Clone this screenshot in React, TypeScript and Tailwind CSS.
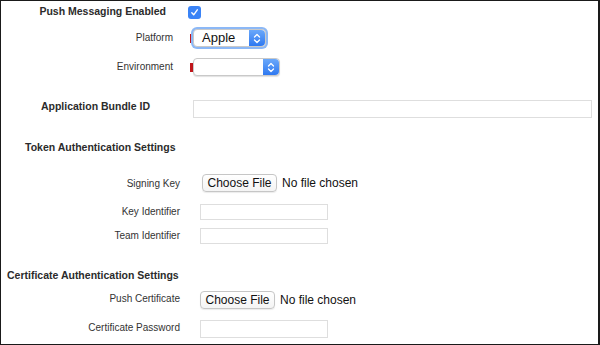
function Stepper() {
  return (
    <div className="flex h-full w-[16px] items-center justify-center rounded-r-[4px] bg-gradient-to-b from-[#6aa8fa] to-[#2e78f0]">
      <svg width="8" height="11" viewBox="0 0 8 11" fill="none">
        <path d="M1.5 4 L4 1.5 L6.5 4" stroke="white" strokeWidth="1.3" strokeLinecap="round" strokeLinejoin="round" />
        <path d="M1.5 7 L4 9.5 L6.5 7" stroke="white" strokeWidth="1.3" strokeLinecap="round" strokeLinejoin="round" />
      </svg>
    </div>
  );
}

function Select({ value, width, focused }: { value?: string; width: string; focused?: boolean }) {
  return (
    <div
      className={`flex h-[18px] items-stretch rounded-[4px] border border-[#c9c9c9] bg-white shadow-[0_1px_1px_rgba(0,0,0,0.12)] ${width} ${
        focused ? 'ring-2 ring-[#8cb8f6]' : ''
      }`}
    >
      <div className="flex flex-1 items-center pl-[8px] text-[13px] text-[#111]">{value}</div>
      <Stepper />
    </div>
  );
}

function Required() {
  return <div className="h-[9px] w-[3px] bg-[#c0161b]" />;
}

function TextInput({ width, height = 'h-[16px]' }: { width: string; height?: string }) {
  return <div className={`border border-[#dedede] bg-white ${width} ${height}`} />;
}

function FileInput() {
  return (
    <div className="flex items-center">
      <div className="flex h-[18px] w-[75px] items-center justify-center rounded-[4px] border border-[#c6c6c6] bg-gradient-to-b from-white to-[#f4f4f4] text-[12px] text-[#111] shadow-[0_1px_1px_rgba(0,0,0,0.08)]">
        Choose File
      </div>
      <span className="ml-[5px] text-[12px] text-[#111]">No file chosen</span>
    </div>
  );
}

const label = 'text-right text-[10px] text-[#333]';
const heading = 'text-[10.5px] font-bold text-[#2b2b2b]';

export default function App() {
  return (
    <div
      className="h-[345px] w-[600px] overflow-hidden border border-r-2 border-[#1a1a1a] bg-white"
      style={{ fontFamily: '"Liberation Sans", Arial, sans-serif' }}
    >
      {/* Push messaging */}
      <div className="flex h-[22px] items-center">
        <div className={`w-[165px] text-right ${heading}`}>Push Messaging Enabled</div>
        <div className="ml-[22px] flex h-[13px] w-[13px] items-center justify-center rounded-[3px] bg-[#3a83f6]">
          <svg width="9" height="9" viewBox="0 0 9 9" fill="none">
            <path d="M1.8 4.8 L3.7 6.8 L7.3 1.8" stroke="white" strokeWidth="1.4" strokeLinecap="round" strokeLinejoin="round" />
          </svg>
        </div>
      </div>

      <div className="flex h-[30px] items-center">
        <div className={`mb-[2px] w-[172px] ${label}`}>Platform</div>
        <div className="ml-[17px] flex items-center">
          <Required />
          <Select value="Apple" width="w-[73px]" focused />
        </div>
      </div>

      <div className="flex h-[28px] items-center">
        <div className={`mb-[2px] w-[172px] ${label}`}>Environment</div>
        <div className="ml-[17px] flex items-center">
          <Required />
          <Select width="w-[87px]" />
        </div>
      </div>

      {/* Bundle */}
      <div className="mt-[14px] flex h-[28px] items-center">
        <div className={`mb-[5px] w-[149px] text-right ${heading}`}>Application Bundle ID</div>
        <div className="ml-[43px]">
          <TextInput width="w-[399px]" height="h-[18px]" />
        </div>
      </div>

      {/* Token auth */}
      <div className={`mt-[14px] flex h-[22px] items-center pl-[24px] ${heading}`}>
        Token Authentication Settings
      </div>

      <div className="mt-[11px] flex h-[26px] items-center">
        <div className={`w-[179px] ${label}`}>Signing Key</div>
        <div className="ml-[22px]">
          <FileInput />
        </div>
      </div>

      <div className="mt-[4px] flex h-[24px] items-center">
        <div className={`mb-[2px] w-[179px] ${label}`}>Key Identifier</div>
        <div className="ml-[20px]">
          <TextInput width="w-[128px]" />
        </div>
      </div>

      <div className="flex h-[24px] items-center">
        <div className={`mb-[2px] w-[179px] ${label}`}>Team Identifier</div>
        <div className="ml-[20px]">
          <TextInput width="w-[128px]" />
        </div>
      </div>

      {/* Certificate auth */}
      <div className={`mt-[17px] flex h-[22px] items-center pl-[6px] ${heading}`}>
        Certificate Authentication Settings
      </div>

      <div className="flex h-[26px] items-center">
        <div className={`mb-[4px] w-[179px] ${label}`}>Push Certificate</div>
        <div className="ml-[20px]">
          <FileInput />
        </div>
      </div>

      <div className="mt-[4px] flex h-[24px] items-center">
        <div className={`mb-[4px] w-[179px] ${label}`}>Certificate Password</div>
        <div className="ml-[20px]">
          <TextInput width="w-[128px]" height="h-[18px]" />
        </div>
      </div>
    </div>
  );
}
